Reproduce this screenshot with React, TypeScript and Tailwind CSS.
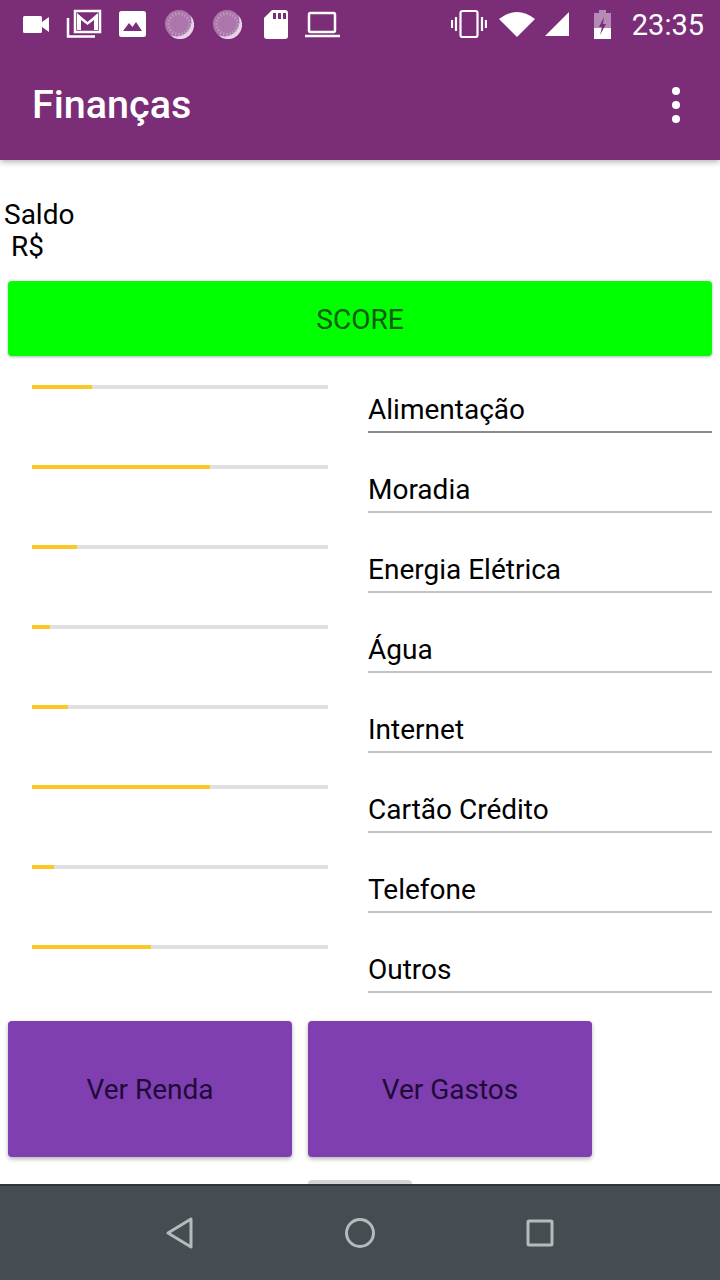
const rows = [
  { label: "Alimentação", pct: 20.3, line: "bg-[#8a8a8a]" },
  { label: "Moradia", pct: 60, line: "bg-[#c4c4c4]" },
  { label: "Energia Elétrica", pct: 15.3, line: "bg-[#c4c4c4]" },
  { label: "Água", pct: 6, line: "bg-[#c4c4c4]" },
  { label: "Internet", pct: 12, line: "bg-[#c4c4c4]" },
  { label: "Cartão Crédito", pct: 60, line: "bg-[#c4c4c4]" },
  { label: "Telefone", pct: 7.3, line: "bg-[#c4c4c4]" },
  { label: "Outros", pct: 40.3, line: "bg-[#c4c4c4]" },
];

function Spinner() {
  const ticks = Array.from({ length: 20 }, (_, i) => i * 18);
  return (
    <svg width="30" height="30" viewBox="0 0 30 30">
      <circle cx="15" cy="15" r="14" fill="#ab76ab" />
      <path d="M26 6 A14 14 0 0 1 6 26 A15 15 0 0 0 26 6Z" fill="#e6d4e6" />
      {ticks.map((a) => (
        <line key={a} x1="15" y1="3" x2="15" y2="6" stroke="#c39cc3" strokeWidth="1.2" transform={`rotate(${a} 15 15)`} />
      ))}
    </svg>
  );
}

function StatusLeft() {
  return (
    <div className="flex items-center">
      <svg className="ml-[23px]" width="26" height="20" viewBox="0 0 26 20" fill="white">
        <rect x="0" y="2" width="19" height="17" rx="1.5" />
        <path d="M19 8 L26 3 V18 L19 13Z" />
      </svg>
      <svg className="ml-[17px]" width="36" height="30" viewBox="0 0 36 30" fill="none" stroke="white">
        <rect x="9" y="2" width="25" height="21" strokeWidth="2.5" fill="#7b2d7b" />
        <path d="M11 4 L21.5 13 L32 4 V21 H28 V11 L21.5 16 L15 11 V21 H11Z" fill="white" stroke="none" />
        <path d="M2 9 V27.5 H29" strokeWidth="2.5" />
      </svg>
      <svg className="ml-[17px]" width="27" height="26" viewBox="0 0 27 26">
        <rect x="0" y="0" width="27" height="26" rx="2.5" fill="white" />
        <path d="M4 20 L10 12 L13.5 16 L17 11 L23 20Z" fill="#7b2d7b" />
      </svg>
      <div className="ml-[18px] flex">
        <Spinner />
      </div>
      <div className="ml-[18px] flex">
        <Spinner />
      </div>
      <svg className="ml-[22px]" width="24" height="29" viewBox="0 0 24 29">
        <path d="M8 0 H21 A3 3 0 0 1 24 3 V26 A3 3 0 0 1 21 29 H3 A3 3 0 0 1 0 26 V8Z" fill="white" />
        <rect x="9" y="3" width="3" height="6" fill="#7b2d7b" />
        <rect x="14" y="3" width="3" height="6" fill="#7b2d7b" />
        <rect x="19" y="3" width="3" height="6" fill="#7b2d7b" />
      </svg>
      <svg className="ml-[17px]" width="35" height="27" viewBox="0 0 35 27" fill="none" stroke="white" strokeWidth="2.5">
        <rect x="4" y="2" width="26" height="19" rx="1.5" />
        <path d="M0 25 H35" />
      </svg>
    </div>
  );
}

function StatusRight() {
  return (
    <div className="flex items-center">
      <svg width="36" height="30" viewBox="0 0 36 30" fill="none" stroke="white" strokeWidth="2.2">
        <rect x="9.5" y="2" width="17" height="26" rx="2" />
        <path d="M5 8 V22 M1 11 V19 M31 8 V22 M35 11 V19" />
      </svg>
      <svg className="ml-[12px]" width="36" height="26" viewBox="0 0 36 26" fill="white">
        <path d="M0 8 Q18 -6 36 8 L18 26Z" />
      </svg>
      <svg className="ml-[10px]" width="24" height="24" viewBox="0 0 24 24" fill="white">
        <path d="M24 0 V24 H0Z" />
      </svg>
      <svg className="ml-[25px]" width="17" height="29" viewBox="0 0 17 29">
        <path d="M5 0 H12 V3 H17 V29 H0 V3 H5Z" fill="#b58ab5" />
        <path d="M0 18 H17 V29 H0Z" fill="white" />
        <path d="M10 7 L5 17 H8 L6 25 L12 14 H9Z" fill="#7b2d7b" />
      </svg>
      <span className="ml-[21px] mr-[16px] pt-[2px] text-[29px] leading-none text-white">23:35</span>
    </div>
  );
}

export default function App() {
  return (
    <div className="flex h-[1280px] w-[720px] flex-col overflow-hidden bg-white font-['Roboto',sans-serif]">
      <div className="z-10 flex h-[160px] shrink-0 flex-col bg-[#7b2d78] shadow-[0_2px_6px_rgba(0,0,0,0.3)]">
        <div className="flex h-[48px] items-center justify-between">
          <StatusLeft />
          <StatusRight />
        </div>
        <div className="flex h-[112px] items-center justify-between pl-[32px] pr-[40px] pt-[2px]">
          <span className="text-[39.5px] font-medium text-white">Finanças</span>
          <div className="flex flex-col gap-[6px]">
            <span className="h-[8px] w-[8px] rounded-full bg-white" />
            <span className="h-[8px] w-[8px] rounded-full bg-white" />
            <span className="h-[8px] w-[8px] rounded-full bg-white" />
          </div>
        </div>
      </div>

      <div className="flex min-h-0 flex-1 flex-col">
        <div className="mt-[39px] pl-[4px] text-[28px] leading-[32px] text-black">
          <div>Saldo</div>
          <div className="pl-[7px]">R$</div>
        </div>

        <button className="mx-[8px] mt-[18px] flex h-[75px] shrink-0 items-center justify-center rounded-[4px] bg-[#00ff00] pt-[2px] text-[28px] text-[#0b5c0b] shadow-[0_1px_3px_rgba(0,0,0,0.3)]">
          SCORE
        </button>

        <div className="mt-[5px] flex flex-col">
          {rows.map((r) => (
            <div key={r.label} className="flex h-[80px] shrink-0">
              <div className="ml-[32px] mt-[24px] h-[4px] w-[296px] bg-[#e0e0e0]">
                <div className="h-full bg-[#fbc926]" style={{ width: `${r.pct}%` }} />
              </div>
              <div className="ml-[40px] flex w-[344px] flex-col">
                <div className="mt-[31px] text-[28px] leading-[36px] text-black">{r.label}</div>
                <div className={`mt-[3px] h-[2px] ${r.line}`} />
              </div>
            </div>
          ))}
        </div>

        <div className="mt-[20px] flex gap-[16px] pl-[8px]">
          <button className="flex h-[136px] w-[284px] items-center justify-center rounded-[4px] bg-[#7f3fb0] pt-[2px] text-[28px] text-[#1f0a3a] shadow-[0_2px_4px_rgba(0,0,0,0.3)]">
            Ver Renda
          </button>
          <button className="flex h-[136px] w-[284px] items-center justify-center rounded-[4px] bg-[#7f3fb0] pt-[2px] text-[28px] text-[#1f0a3a] shadow-[0_2px_4px_rgba(0,0,0,0.3)]">
            Ver Gastos
          </button>
        </div>

        <div className="mt-auto ml-[308px] h-[4px] w-[104px] rounded-t-[4px] bg-[#d4d4d4]" />
      </div>

      <div className="flex h-[96px] shrink-0 items-center justify-center gap-[150px] border-t-[2px] border-[#30363a] bg-[#454d52]">
        <svg width="28" height="32" viewBox="0 0 28 32" fill="none" stroke="#b5baba" strokeWidth="3" strokeLinejoin="round">
          <path d="M25 2 V30 L2 16Z" />
        </svg>
        <svg width="32" height="32" viewBox="0 0 32 32" fill="none" stroke="#b5baba" strokeWidth="3">
          <circle cx="16" cy="16" r="13.5" />
        </svg>
        <svg width="28" height="28" viewBox="0 0 28 28" fill="none" stroke="#b5baba" strokeWidth="3">
          <rect x="2" y="2" width="24" height="24" rx="1" />
        </svg>
      </div>
    </div>
  );
}
